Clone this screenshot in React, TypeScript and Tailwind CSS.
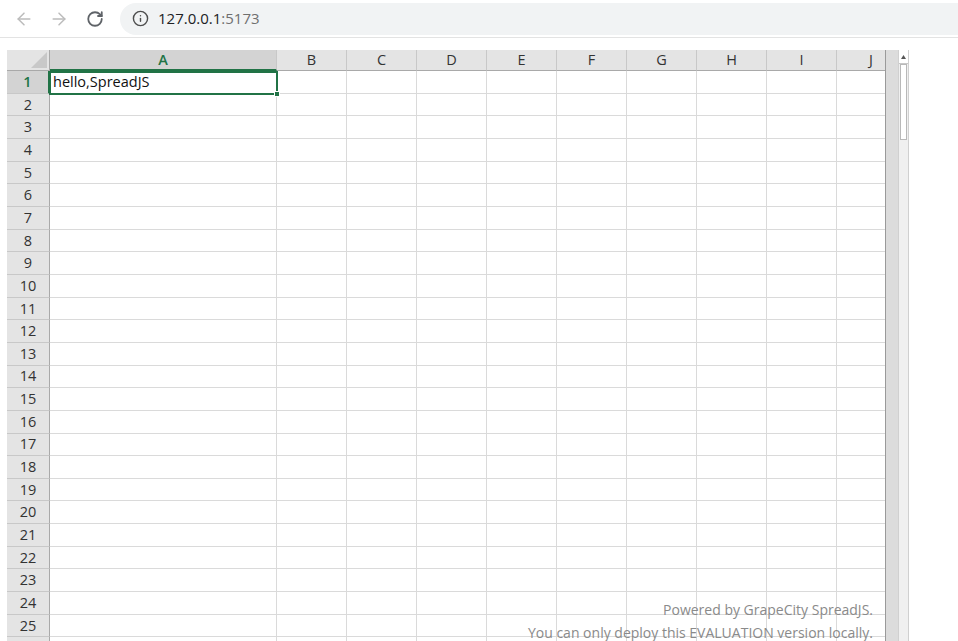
import { ArrowLeft, ArrowRight, RotateCw, Info } from "lucide-react";

const COLS = ["A", "B", "C", "D", "E", "F", "G", "H", "I", "J"];
const ROWS = Array.from({ length: 26 }, (_, i) => i + 1);

function Toolbar() {
  return (
    <div className="flex h-[38px] items-center border-b border-[#e3e3e3] bg-white">
      <div className="flex w-[120px] items-center pl-[14px]">
        <ArrowLeft size={20} strokeWidth={1.8} className="text-[#bcbcbc]" />
        <ArrowRight size={20} strokeWidth={1.8} className="ml-[15px] text-[#bcbcbc]" />
        <RotateCw size={18} strokeWidth={2.4} className="ml-[17px] text-[#5f6368]" />
      </div>
      <div className="flex h-[32px] flex-1 items-center rounded-l-full bg-[#f1f3f4] pl-[12px]">
        <Info size={17} strokeWidth={2} className="text-[#4d4d4d]" />
        <span className="ml-[9px] text-[15px] text-[#202124]">
          127.0.0.1<span className="text-[#6f6f6f]">:5173</span>
        </span>
      </div>
    </div>
  );
}

function Sheet() {
  return (
    <div className="relative">
      <div className="grid grid-cols-[43px_227px_repeat(8,70px)_48px] grid-rows-[21px_repeat(26,22.66px)]">
        {/* corner */}
        <div className="relative border-r border-b border-[#a9a9a9] bg-[#e4e4e4]">
          <svg className="absolute right-[2px] bottom-[2px]" width="16" height="16" viewBox="0 0 16 16">
            <polygon points="16,0 16,16 0,16" fill="#c8c8c8" />
          </svg>
        </div>
        {COLS.map((c, i) => (
          <div
            key={c}
            className={
              i === 0
                ? "flex items-center justify-center border-r border-b-2 border-r-[#c8c8c8] border-b-[#217346] bg-[#d3d3d3] text-[14.5px] font-semibold text-[#217346]"
                : i === 9
                  ? "flex items-center justify-end pr-[12px] border-b border-[#a9a9a9] bg-[#e4e4e4] text-[14.5px] text-[#333]"
                  : "flex items-center justify-center border-r border-b border-r-[#c8c8c8] border-b-[#a9a9a9] bg-[#e4e4e4] text-[14.5px] text-[#333]"
            }
          >
            {c}
          </div>
        ))}
        {ROWS.map((r) => (
          <Row key={r} r={r} />
        ))}
      </div>
      {/* selection */}
      <div className="pointer-events-none absolute top-[21px] left-[42px] h-[24px] w-[229px] border-2 border-[#217346]">
        <div className="absolute -right-[4px] -bottom-[4px] h-[6px] w-[6px] border border-white bg-[#217346]" />
      </div>
    </div>
  );
}

function Row({ r }: { r: number }) {
  const sel = r === 1;
  return (
    <>
      <div
        className={
          sel
            ? "flex items-center justify-center border-r-2 border-b border-r-[#217346] border-b-[#c8c8c8] bg-[#d3d3d3] text-[14.5px] font-semibold text-[#217346]"
            : "flex items-center justify-center border-r border-b border-r-[#a9a9a9] border-b-[#c8c8c8] bg-[#e4e4e4] text-[14.5px] text-[#333]"
        }
      >
        {r}
      </div>
      {COLS.map((c, i) => (
        <div
          key={c}
          className={
            i === 9
              ? "border-b border-[#dadada] bg-white"
              : "flex items-center border-r border-b border-[#dadada] bg-white pl-[3px] text-[14.5px] text-[#111]"
          }
        >
          {sel && i === 0 ? "hello,SpreadJS" : null}
        </div>
      ))}
    </>
  );
}

function ScrollBar() {
  return (
    <div className="flex h-full">
      <div className="w-[13px] border-l border-[#9a9a9a] bg-[#dcdcdc]" />
      <div className="flex w-[11px] flex-col border-x border-[#d0d0d0] bg-[#f0f0f0]">
        <div className="flex h-[14px] items-center justify-center border-b border-[#c8c8c8] bg-white">
          <svg width="5" height="4" viewBox="0 0 5 4">
            <polygon points="2.5,0 5,4 0,4" fill="#555" />
          </svg>
        </div>
        <div className="mx-[1px] h-[76px] border border-[#b8b8b8] bg-white" />
      </div>
    </div>
  );
}

export default function App() {
  return (
    <div className="h-[641px] w-[958px] overflow-hidden bg-white font-['Open_Sans','Noto_Sans',sans-serif]">
      <Toolbar />
      <div className="mt-[12px] flex pl-[7px]">
        <div className="relative h-[591px] w-[878px] overflow-hidden">
          <Sheet />
          <div className="pointer-events-none absolute right-[12px] bottom-[-3px] text-right text-[14px] leading-[23px] text-[#8a8a8a]">
            <div>Powered by GrapeCity SpreadJS.</div>
            <div>You can only deploy this EVALUATION version locally.</div>
          </div>
        </div>
        <div className="h-[591px]">
          <ScrollBar />
        </div>
      </div>
    </div>
  );
}
